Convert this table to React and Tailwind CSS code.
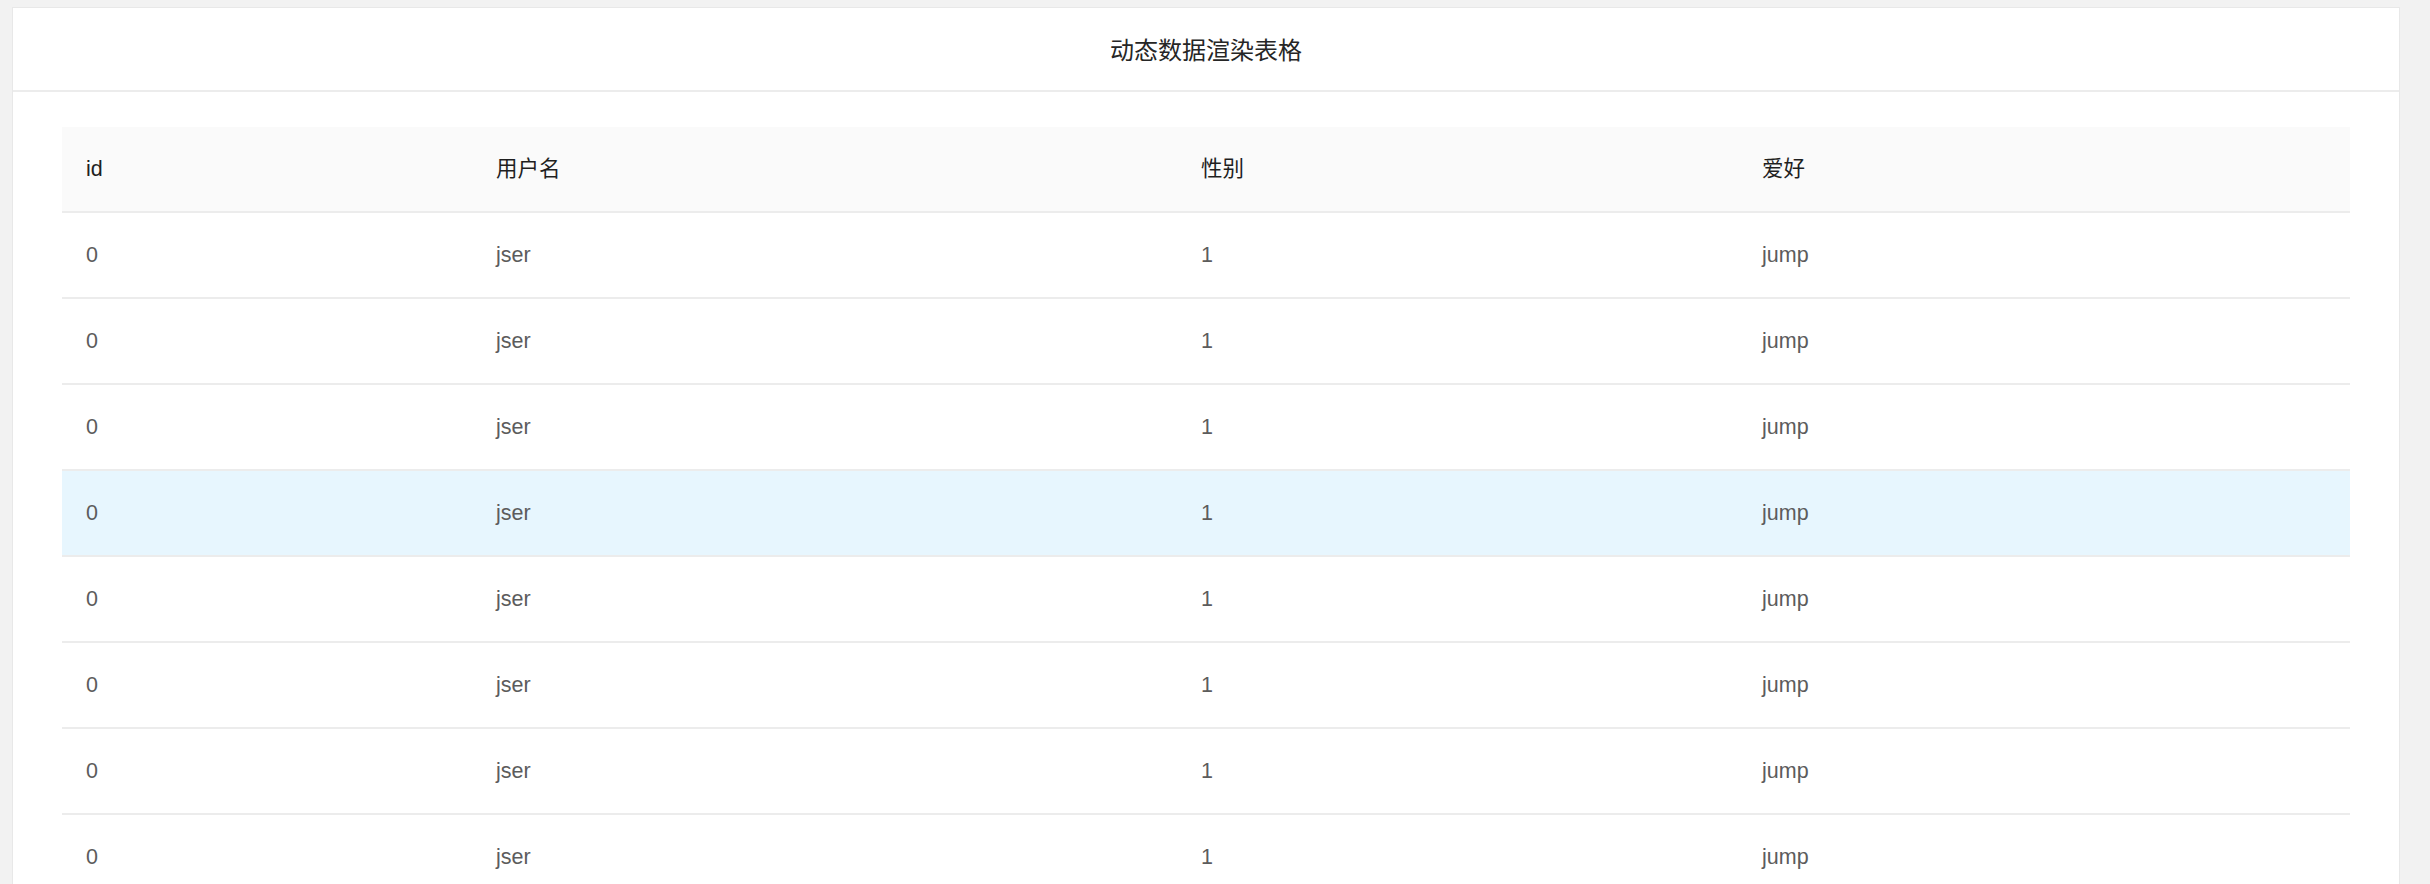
import React from "react";

// static copy of the rendered data — every row is the same record
const columns = [
  { key: "id", title: "id" },
  { key: "username", title: "用户名" },
  { key: "sex", title: "性别" },
  { key: "hobby", title: "爱好" },
];

const rows = Array.from({ length: 10 }, () => ({
  id: 0,
  username: "jser",
  sex: 1,
  hobby: "jump",
}));

const gridCols = "grid grid-cols-[410px_705px_561px_611px]";

export default function App() {
  return (
    <div
      className="h-screen overflow-hidden bg-[#f2f2f2] pt-[7px] pl-[12px] pr-[30px]"
      style={{ fontFamily: '"Liberation Sans", "Noto Sans CJK SC", sans-serif' }}
    >
      <div className="bg-white border border-[#e8e8e8]">
        {/* card head */}
        <div
          className="h-[84px] border-b-2 border-[#ececec] flex items-center justify-center text-[24px] text-[#262626]"
          style={{ fontFamily: '"Noto Sans CJK SC", sans-serif' }}
        >
          动态数据渲染表格
        </div>

        {/* card body */}
        <div className="px-[49px] pt-[35px]">
          <div className={`${gridCols} h-[86px] bg-[#fafafa] border-b-2 border-[#ececec] items-center text-[21.5px] text-[#1f1f1f]`}>
            {columns.map((c) => (
              <div key={c.key} className="px-[24px]">
                {c.title}
              </div>
            ))}
          </div>

          {rows.map((r, i) => (
            <div
              key={i}
              className={`${gridCols} h-[86px] border-b-2 border-[#ececec] items-center text-[21.5px] text-[#5c5c5c] ${
                i === 3 ? "bg-[#e7f6fe]" : "bg-white"
              }`}
            >
              {columns.map((c) => (
                <div key={c.key} className="px-[24px]">
                  {r[c.key]}
                </div>
              ))}
            </div>
          ))}
        </div>
      </div>
    </div>
  );
}
